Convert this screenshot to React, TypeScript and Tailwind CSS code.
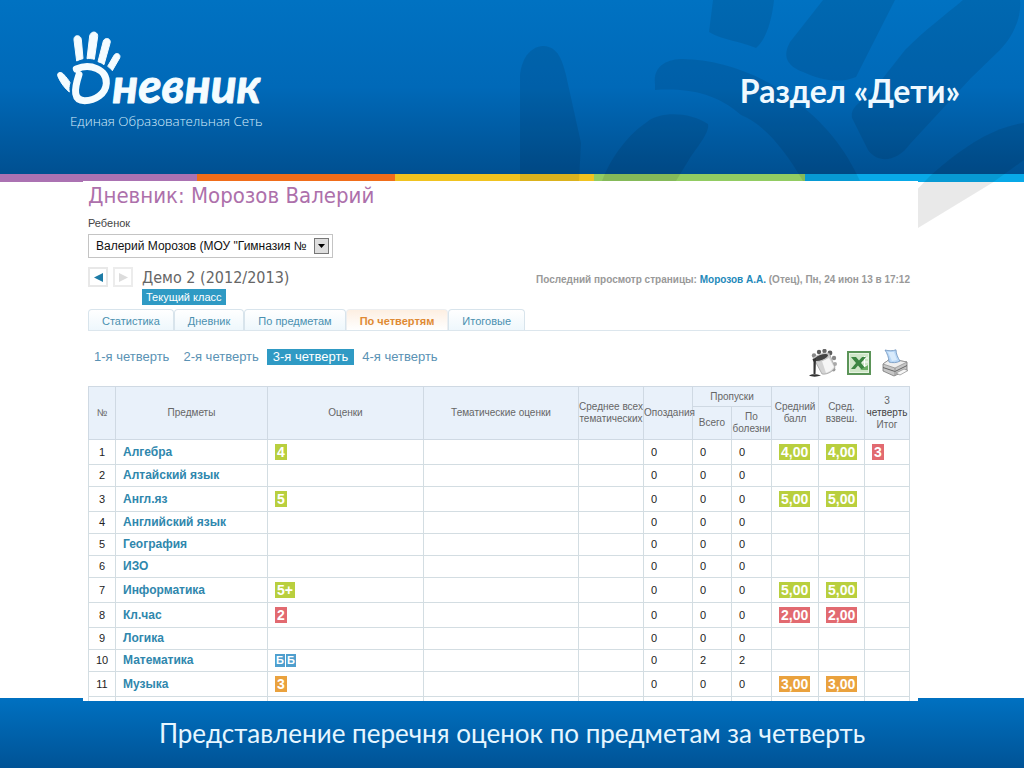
import React from "react";

type Tone = "green" | "red" | "orange";

interface Mark {
  text: string;
  tone: Tone;
}

interface SubjectRow {
  name: string;
  marks?: Mark[];
  absences?: number;
  late: number;
  missed: number;
  sick: number;
  average?: Mark;
  total?: Mark;
}

const toneClass: Record<Tone, string> = {
  green: "bg-[#b9cf3e]",
  red: "bg-[#e26a70]",
  orange: "bg-[#eaa23e]",
};

const rows: SubjectRow[] = [
  { name: "Алгебра", marks: [{ text: "4", tone: "green" }], late: 0, missed: 0, sick: 0, average: { text: "4,00", tone: "green" }, total: { text: "3", tone: "red" } },
  { name: "Алтайский язык", late: 0, missed: 0, sick: 0 },
  { name: "Англ.яз", marks: [{ text: "5", tone: "green" }], late: 0, missed: 0, sick: 0, average: { text: "5,00", tone: "green" } },
  { name: "Английский язык", late: 0, missed: 0, sick: 0 },
  { name: "География", late: 0, missed: 0, sick: 0 },
  { name: "ИЗО", late: 0, missed: 0, sick: 0 },
  { name: "Информатика", marks: [{ text: "5+", tone: "green" }], late: 0, missed: 0, sick: 0, average: { text: "5,00", tone: "green" } },
  { name: "Кл.час", marks: [{ text: "2", tone: "red" }], late: 0, missed: 0, sick: 0, average: { text: "2,00", tone: "red" } },
  { name: "Логика", late: 0, missed: 0, sick: 0 },
  { name: "Математика", absences: 2, late: 0, missed: 2, sick: 2 },
  { name: "Музыка", marks: [{ text: "3", tone: "orange" }], late: 0, missed: 0, sick: 0, average: { text: "3,00", tone: "orange" } },
];

const tabs = ["Статистика", "Дневник", "По предметам", "По четвертям", "Итоговые"];
const quarters = ["1-я четверть", "2-я четверть", "3-я четверть", "4-я четверть"];

function Badge({ text, tone }: Mark) {
  return (
    <span className={`inline-block px-[2px] text-sm leading-4 font-bold text-white ${toneClass[tone]}`}>
      {text}
    </span>
  );
}

function Logo() {
  return (
    <svg viewBox="0 0 750 360" className="h-[120px] w-[250px] shrink-0" role="img" aria-label="Дневник">
      <g fill="#f4fcff" stroke="#f4fcff" strokeWidth="3" strokeLinejoin="round">
        <path d="M102 60 C100 44 121 42 124 58 L129 116 C124 117 115 120 110 123 Z" />
        <path d="M149 48 C153 30 175 34 173 50 L163 118 C156 116 148 115 141 116 Z" />
        <path d="M190 63 C196 49 215 56 210 70 L192 134 C187 130 181 127 174 125 Z" />
        <path d="M222 106 C229 95 244 103 239 114 L217 152 C213 147 208 142 203 139 Z" />
        <path d="M54 170 C49 157 62 154 70 162 C80 173 86 180 90 188 C87 198 86 208 88 216 C76 206 62 189 54 170 Z" />
      </g>
      <path
        d="M109 147 C150 129 201 148 199 190 C197 222 165 242 134 242 C101 242 101 212 117 164"
        fill="none"
        stroke="#f4fcff"
        strokeWidth="21"
        strokeLinecap="round"
        strokeLinejoin="round"
      />
      <text x="217" y="249" fill="#f4fcff" stroke="#f4fcff" strokeWidth="3" strokeLinejoin="round" className="font-['Lato'] text-[144px] font-bold italic">
        невник
      </text>
      <text x="90" y="318" fill="#d5ecfb" className="font-['Open_Sans'] text-[40px] font-light">
        Единая Образовательная Сеть
      </text>
    </svg>
  );
}

function HandPattern() {
  return (
    <svg
      viewBox="0 0 1024 240"
      className="pointer-events-none absolute top-0 right-0 h-[240px] w-[1024px]"
      aria-hidden="true"
    >
      <g fill="#000" fillOpacity="0.085">
        <path d="M520 181 L520 75 C522 56 532 46 544 46 C558 47 562 60 566 75 L581 143 L579 181 Z" />
        <path d="M602 181 C612 155 630 133 647 122 C660 111 690 112 708 124 C710 132 698 146 690 158 L676 181 Z" />
        <path d="M655 84 C653 68 664 60 680 59 C715 58 762 74 790 97 C825 122 846 150 860 181 L803 181 C785 150 765 125 741 115 C715 92 685 88 655 90 Z" />
        <path d="M713 0 L774 0 C772 20 766 40 756 48 C740 41 722 40 709 32 Z" />
        <path d="M823 0 L895 0 L856 77 C840 84 820 80 803 72 C785 65 783 55 790 42 Z" />
        <path d="M963 0 L1020 0 C1022 18 1012 38 1000 50 L971 78 L910 144 C897 162 878 164 868 150 L852 118 C850 106 862 102 872 92 L905 50 C925 30 945 15 963 0 Z" />
        <path d="M1024 123 C1000 126 970 140 930 176 L880 228 L918 228 L992 183 L1024 160 Z" />
      </g>
    </svg>
  );
}

function PaintIcon() {
  return (
    <svg viewBox="0 0 28 28" className="size-7" aria-hidden="true">
      <g fill="#5c5c5c">
        <circle cx="5" cy="6.500" r="2.200" fill="#888" />
        <circle cx="10" cy="3" r="2.200" />
        <circle cx="15.500" cy="2" r="2.200" fill="#666" />
        <circle cx="21" cy="4" r="2.400" />
        <circle cx="25" cy="9" r="2.200" fill="#888" />
        <circle cx="26" cy="15" r="2" fill="#aaa" />
        <circle cx="24.500" cy="20.500" r="2" fill="#999" />
      </g>
      <path d="M5 10 L20 4 L26 18 C25 22 18 26 13 25 Z" fill="#d4d4d4" stroke="#999" strokeWidth=".7" />
      <path d="M13 12 L20 9 L25 18 C22 22 19 23 17 24 Z" fill="#f6f6f6" />
      <ellipse cx="12" cy="8.500" rx="8" ry="3.200" transform="rotate(-20 12 8.500)" fill="#444" stroke="#c8c8c8" strokeWidth="1.200" />
      <path d="M3.500 10 L7 9 L6.500 25 L4.500 25 L4.500 13 Z" fill="#333" />
      <path d="M0 26.500 C3 24.500 8 25 12 26.500 C8 28 3 28 0 26.500 Z" fill="#333" />
    </svg>
  );
}

function ExcelIcon() {
  return (
    <svg viewBox="0 0 24 24" className="size-6" aria-hidden="true">
      <rect x="1" y="1" width="22" height="22" fill="#e7f3e2" stroke="#5b9458" strokeWidth="2" />
      <rect x="3" y="3" width="18" height="18" fill="#cfe6c7" />
      <path d="M14 7 H21 M14 11 H21 M14 15 H21 M17.500 5 V19" stroke="#fff" strokeWidth="1" />
      <path d="M4 6 H9 L12 9.500 L15 6 H19 L14 12 L19 18 H14 L11 14.500 L8 18 H4 L9 12 Z" fill="#3c8541" />
      <path d="M13 19 H21 V14 Z" fill="#6bae63" />
    </svg>
  );
}

function PrinterIcon() {
  return (
    <svg viewBox="0 0 28 28" className="size-7" aria-hidden="true">
      <path d="M2 15 L9 10 L26 13 L26 21 L13 27 L2 22 Z" fill="#c6c6c6" stroke="#777" strokeWidth=".8" />
      <path d="M2 15 L9 10 L26 13 L14 19 Z" fill="#eeeeee" stroke="#8a8a8a" strokeWidth=".7" />
      <path d="M4 1 C8 2 12 2 15 0.800 C15 5 17 9 19 12 C16 14 11 14 8 13 C8 9 6 4 4 1 Z" fill="#b9d8f7" stroke="#6f93bd" strokeWidth=".8" />
      <path d="M7 3 L13 3 L16 11 L11 12 Z" fill="#d9ebfc" />
      <path d="M2 18.500 L14 22.500 L26 16.500" fill="none" stroke="#666" strokeWidth="1" />
      <path d="M14 19 V26.500" stroke="#888" strokeWidth=".8" />
      <path d="M15 24 L23 20 L27 21.500 L19 26 Z" fill="#f6f6f6" stroke="#888" strokeWidth=".7" />
    </svg>
  );
}

const th = "border border-[#cfd9e3] p-0 font-normal leading-3";
const td = "border border-[#d3dde2] py-0";

function GradesTable() {
  return (
    <table className="w-full table-fixed border-collapse text-[11px] text-[#222]">
      <colgroup>
        <col className="w-[27px]" />
        <col className="w-[152px]" />
        <col className="w-[156px]" />
        <col />
        <col className="w-[65px]" />
        <col className="w-[49px]" />
        <col className="w-[39px]" />
        <col className="w-[40px]" />
        <col className="w-[47px]" />
        <col className="w-[46px]" />
        <col className="w-[45px]" />
      </colgroup>
      <thead className="bg-[#e9f1fa] text-[10px] text-[#666]">
        <tr className="h-5">
          <th rowSpan={2} className={th}>№</th>
          <th rowSpan={2} className={th}>Предметы</th>
          <th rowSpan={2} className={th}>Оценки</th>
          <th rowSpan={2} className={th}>Тематические оценки</th>
          <th rowSpan={2} className={th}>Среднее всех тематических</th>
          <th rowSpan={2} className={th}>Опоздания</th>
          <th colSpan={2} className={th}>Пропуски</th>
          <th rowSpan={2} className={th}>Средний балл</th>
          <th rowSpan={2} className={th}>Сред. взвеш.</th>
          <th rowSpan={2} className={th}>3 <span className="text-[#444]">четверть</span> Итог</th>
        </tr>
        <tr className="h-[33px]">
          <th className={th}>Всего</th>
          <th className={th}>По болезни</th>
        </tr>
      </thead>
      <tbody>
        {rows.map((row, index) => (
          <tr key={row.name} className={row.marks ? "h-[25px]" : "h-[22px]"}>
            <td className={`${td} text-center`}>{index + 1}</td>
            <td className={`${td} pl-[7px]`}>
              <a href="#" className="text-xs leading-4 font-bold text-[#2f87ad]">{row.name}</a>
            </td>
            <td className={`${td} pl-[7px]`}>
              <div className="flex gap-px">
                {row.marks?.map((mark) => <Badge key={mark.text} {...mark} />)}
                {Array.from({ length: row.absences ?? 0 }, (_, i) => (
                  <span key={i} className="bg-[#4f9fce] px-px text-[11px] leading-[13px] font-bold text-white">Б</span>
                ))}
              </div>
            </td>
            <td className={td} />
            <td className={td} />
            <td className={`${td} pl-[7px]`}>{row.late}</td>
            <td className={`${td} pl-[7px]`}>{row.missed}</td>
            <td className={`${td} pl-[7px]`}>{row.sick}</td>
            <td className={`${td} pl-[7px]`}>
              <div className="flex">{row.average && <Badge {...row.average} />}</div>
            </td>
            <td className={`${td} pl-[7px]`}>
              <div className="flex">{row.average && <Badge {...row.average} />}</div>
            </td>
            <td className={`${td} pl-[7px]`}>
              <div className="flex">{row.total && <Badge {...row.total} />}</div>
            </td>
          </tr>
        ))}
        <tr className="h-1" aria-hidden="true">
          {Array.from({ length: 11 }, (_, i) => (
            <td key={i} className="border border-b-0 border-[#d3dde2] p-0" />
          ))}
        </tr>
      </tbody>
    </table>
  );
}

export default function App() {
  return (
    <div className="relative flex min-h-screen flex-col overflow-x-hidden bg-white font-['Liberation_Sans',sans-serif]">
      <header className="flex h-[174px] items-start justify-between bg-linear-to-b from-[#0072c2] via-[#0069b8] to-[#005091] pt-5 pr-16 pl-10">
        <Logo />
        <h1 className="relative z-10 pt-[50px] font-['Lato',sans-serif] text-[32px] leading-[42px] font-bold text-[#eff9ff]">
          Раздел «Дети»
        </h1>
      </header>
      <div className="grid h-2 grid-cols-[197fr_198fr_199fr_211fr_219fr]">
        <div className="bg-[#ab72b2]" />
        <div className="bg-[#f06d1a]" />
        <div className="bg-[#f0c320]" />
        <div className="bg-[#92cc62]" />
        <div className="bg-[#08a9e8]" />
      </div>
      <HandPattern />

      <main className="relative z-10 -mt-px -mb-[3px] mr-[106px] ml-[83px] flex-1 bg-white pr-2 pl-[5px]">
        <h2 className="pt-px font-['DejaVu_Sans_Condensed','DejaVu_Sans',sans-serif] text-[22px] leading-7 text-[#ad70ab]">
          Дневник: Морозов Валерий
        </h2>
        <label htmlFor="child" className="mt-[5px] block text-[11px] leading-4 text-[#444]">
          Ребенок
        </label>
        <div className="relative mt-[3px] w-[245px]">
          <select
            id="child"
            className="block h-6 w-full appearance-none border border-[#c4c4c4] bg-white pr-[22px] pl-[7px] text-[12px] text-[#111]"
          >
            <option>Валерий Морозов (МОУ "Гимназия №</option>
          </select>
          <span className="pointer-events-none absolute top-1 right-1 flex h-4 w-[15px] items-center justify-center border border-[#777] bg-[#dedede]">
            <svg viewBox="0 0 7 4" className="h-1 w-[7px]" aria-hidden="true">
              <path d="M0 0 H7 L3.500 4 Z" fill="#000" />
            </svg>
          </span>
        </div>

        <div className="mt-2 flex items-start justify-between">
          <div className="flex items-start">
            <button type="button" aria-label="Назад" className="mt-px flex size-5 items-center justify-center border-2 border-[#e8e8e8] bg-white">
              <svg viewBox="0 0 9 9" className="size-[9px]" aria-hidden="true"><path d="M9 0 V9 L0 4.500 Z" fill="#1d7ba6" /></svg>
            </button>
            <button type="button" aria-label="Вперёд" className="mt-px ml-[5px] flex size-5 items-center justify-center border-2 border-[#ececec] bg-white">
              <svg viewBox="0 0 9 9" className="size-[9px]" aria-hidden="true"><path d="M0 0 V9 L9 4.500 Z" fill="#dcdcdc" /></svg>
            </button>
            <div className="ml-[9px] flex flex-col items-start">
              <div className="font-['DejaVu_Sans_Condensed','DejaVu_Sans',sans-serif] text-base leading-[23px] text-[#666]">
                Демо 2 (2012/2013)
              </div>
              <span className="bg-[#2f9ac4] px-1 text-[11px] leading-4 text-white">Текущий класс</span>
            </div>
          </div>
          <p className="pt-[6px] text-[10px] leading-4 font-bold text-[#999]">
            Последний просмотр страницы: <a href="#" className="text-[#2389ba]">Морозов А.А.</a> (Отец), Пн, 24 июн 13 в 17:12
          </p>
        </div>

        <nav className="mt-1 flex h-[22px] border-b border-[#dce6ed] text-[11px]">
          {tabs.map((tab) => (
            <a
              key={tab}
              href="#"
              className={
                tab === "По четвертям"
                  ? "rounded-t border border-b-0 border-[#eceef0] bg-linear-to-b from-[#fdefe2] to-white px-[13px] leading-[22px] font-bold text-[#e08a33]"
                  : "rounded-t border border-b-0 border-[#d8e4ec] bg-linear-to-b from-white to-[#eef7fc] px-[13px] leading-[22px] text-[#4a90b0]"
              }
            >
              {tab}
            </a>
          ))}
        </nav>

        <div className="flex h-[55px] items-start justify-between pt-[18px]">
          <div className="flex gap-[2px] text-[13px] leading-4">
            {quarters.map((quarter) => (
              <a
                key={quarter}
                href="#"
                className={quarter === "3-я четверть" ? "bg-[#2f9ac4] px-[6px] text-white" : "px-[6px] text-[#5a92b4]"}
              >
                {quarter}
              </a>
            ))}
          </div>
          <div className="flex items-center gap-[10px] pr-px">
            <button type="button" aria-label="Оформление"><PaintIcon /></button>
            <button type="button" aria-label="Экспорт"><ExcelIcon /></button>
            <button type="button" aria-label="Печать"><PrinterIcon /></button>
          </div>
        </div>

        <GradesTable />
      </main>

      <footer className="flex h-[70px] items-center justify-center bg-linear-to-b from-[#0071c1] to-[#005396] font-['Lato',sans-serif] text-[26px] leading-9 text-[#e6f6ff]">
        Представление перечня оценок по предметам за четверть
      </footer>
    </div>
  );
}
